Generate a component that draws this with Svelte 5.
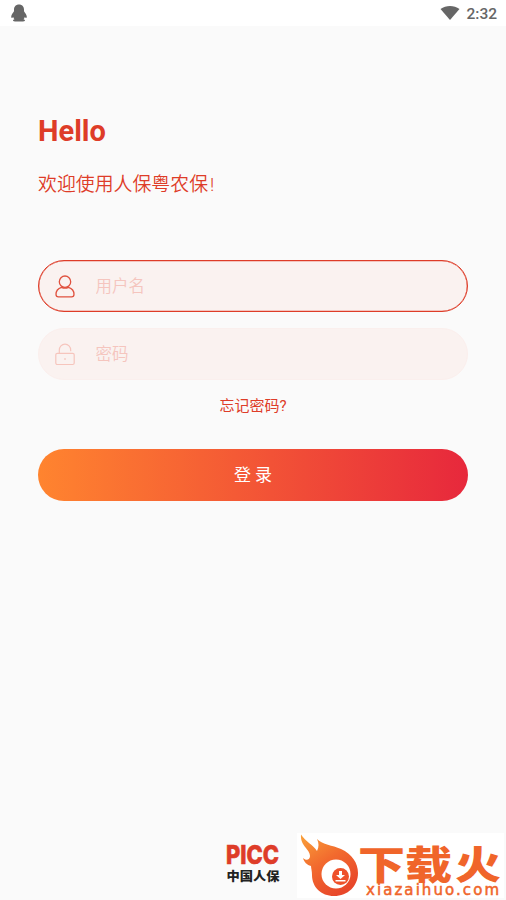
<script lang="ts">
  let username = $state("");
  let password = $state("");
</script>

<div class="screen">
  <header class="statusbar">
    <svg class="penguin" width="18" height="18" viewBox="0 0 18 18" aria-hidden="true">
      <path d="M9 .5C5.800.5 4 2.800 4 5.600v1.600C2.700 9 1.200 11 1.200 12.800c0 1.300.800 1.500 2 .2.200.900.700 1.700 1.300 2.300-.9.300-1.500.8-1.500 1.300 0 .7 1.500 1 3.300 1h5.400c1.800 0 3.300-.3 3.300-1 0-.5-.6-1-1.500-1.300.6-.6 1.100-1.400 1.300-2.300 1.200 1.300 2 1.100 2-.2 0-1.800-1.500-3.800-2.800-5.600V5.600C14 2.800 12.200.5 9 .5z" />
    </svg>
    <div class="status">
      <svg width="20" height="15" viewBox="0 0 20 15" aria-hidden="true">
        <path d="M.5 3C6-1 14-1 19.500 3L10 14z" />
      </svg>
      <span class="clock">2:32</span>
    </div>
  </header>

  <main>
    <h1>Hello</h1>
    <p class="welcome">欢迎使用人保粤农保<span>!</span></p>

    <form onsubmit={(e) => e.preventDefault()}>
      <label class="field active">
        <svg width="20" height="23" viewBox="0 0 20 23" aria-hidden="true">
          <circle cx="10" cy="6.700" r="5.700" />
          <path d="M6.500 12.400C3.300 13.500 1 16 1 19.200c0 1.600.8 2.600 2.400 2.600h13.200c1.600 0 2.400-1 2.400-2.600 0-3.200-2.300-5.700-5.500-6.800-2 .9-5 .9-7 0z" />
        </svg>
        <input type="text" placeholder="用户名" bind:value={username} />
      </label>
      <label class="field">
        <svg width="20" height="23" viewBox="0 0 20 23" aria-hidden="true">
          <rect x=".8" y="10.300" width="18.400" height="11.200" rx="1.500" />
          <path d="M4.300 10.300V7.200C4.300 3.700 6.800 1.200 10 1.200s5.700 2.500 5.700 6v1M10 15v2" />
        </svg>
        <input type="password" placeholder="密码" bind:value={password} />
      </label>
      <a class="forgot" href="#forgot">忘记密码?</a>
      <button type="submit">登 录</button>
    </form>
  </main>

  <footer>
    <svg class="picc" width="56" height="42" viewBox="0 0 56 42">
      <text class="picc-name" x="1" y="21.500" textLength="53" lengthAdjust="spacingAndGlyphs">PICC</text>
      <text class="picc-cn" x="1.500" y="39" textLength="53" lengthAdjust="spacingAndGlyphs">中国人保</text>
    </svg>
  </footer>

  <div class="watermark">
    <svg width="207" height="65" viewBox="0 0 207 65">
      <defs>
        <linearGradient id="flame" x1="0" y1="0" x2=".6" y2="1">
          <stop offset="0" stop-color="#f9a13a" />
          <stop offset=".5" stop-color="#f26a2e" />
          <stop offset="1" stop-color="#e8472a" />
        </linearGradient>
      </defs>
      <path
        fill="url(#flame)"
        d="M4 1.500C8 8 16 12 20 18c2-4 2-8 0-12 6 6 15 6 24 10 11 5 17 14 17 24 0 13-10 23-24 23-13 0-22-9-22-21 0-4-1-7-1-9-4-1-7-4-8-8 3 3 7 2 7-2C13 16 3 13 4 1.500z" />
      <circle cx="39" cy="41" r="14.500" fill="#fff" />
      <circle cx="43.500" cy="43.500" r="8.500" fill="#ee512b" />
      <path fill="#fff" d="M42 38h3v4h3l-4.500 4-4.500-4h3zM38.500 47h10v1.500h-10z" />
      <text class="wm-cn" x="61" y="45.500" textLength="94" lengthAdjust="spacingAndGlyphs">下载</text>
      <text class="wm-cn" x="158" y="45.500" textLength="46" lengthAdjust="spacingAndGlyphs">火</text>
      <text class="wm-url" x="69" y="62.300" textLength="133">xiazaihuo.com</text>
    </svg>
  </div>
</div>

<style>
  :global(body) {
    margin: 0;
    background: #fafafa;
  }

  .screen {
    position: relative;
    display: flex;
    flex-direction: column;
    height: 900px;
    background: #fafafa;
    color: #de3c28;
    font-family: Roboto, "Noto Sans CJK SC", sans-serif;
    overflow: hidden;
  }

  .statusbar {
    display: flex;
    align-items: center;
    justify-content: space-between;
    box-sizing: border-box;
    height: 26px;
    padding: 0 9px 0 10px;
    background: #fff;
    color: #666;
  }
  .statusbar svg {
    display: block;
    fill: #666;
  }
  .status {
    display: flex;
    align-items: center;
    gap: 6px;
  }
  .clock {
    font-size: 15.500px;
    font-weight: 500;
    line-height: 26px;
    padding-top: 1px;
  }

  main {
    flex: 1;
    padding: 87px 38px 0;
  }
  h1 {
    margin: 0;
    font-size: 29px;
    font-weight: 700;
    line-height: 36px;
  }
  .welcome {
    margin: 21px 0 0;
    font-size: 18.900px;
    font-weight: 350;
    line-height: 30px;
  }
  .welcome span {
    margin-left: 2px;
  }

  form {
    display: flex;
    flex-direction: column;
    margin-top: 60px;
  }
  .field {
    display: flex;
    align-items: center;
    gap: 21px;
    box-sizing: border-box;
    height: 52px;
    padding: 0 15.500px;
    border: 1px solid #faefed;
    border-radius: 26px;
    background: #faf2f0;
  }
  .field + .field {
    margin-top: 16px;
  }
  .field.active {
    border: 1px solid #de3c28;
    box-shadow: inset 0 0 0 0.300px #de3c28;
  }
  .field svg {
    flex: none;
    fill: none;
    stroke: #f6c5bd;
    stroke-width: 1.200;
  }
  .field.active svg {
    stroke: #e0523f;
    stroke-width: 1.300;
  }
  input {
    flex: 1;
    min-width: 0;
    padding: 0;
    border: 0;
    outline: 0;
    background: none;
    color: #de3c28;
    font: inherit;
    font-size: 16.500px;
    font-weight: 350;
  }
  input::placeholder {
    color: #f5c5be;
    opacity: 1;
  }
  .forgot {
    align-self: center;
    margin-top: 14px;
    color: #de3c28;
    font-size: 15px;
    line-height: 24px;
    text-decoration: none;
  }
  button {
    height: 52px;
    margin-top: 31px;
    padding: 0 0 3px;
    border: 0;
    border-radius: 26px;
    background: linear-gradient(90deg, #ff842f, #e7283c);
    color: #fff;
    font: inherit;
    font-size: 17px;
  }

  footer {
    display: flex;
    justify-content: center;
    padding-bottom: 16px;
  }
  .picc {
    display: block;
    overflow: visible;
  }
  .picc-name {
    fill: #de3c28;
    stroke: #de3c28;
    stroke-width: 0.600;
    font-family: Inter, sans-serif;
    font-size: 26px;
    font-weight: 800;
  }
  .picc-cn {
    fill: #222;
    font-family: "Noto Sans CJK SC", sans-serif;
    font-size: 12px;
    font-weight: 900;
  }

  .watermark {
    position: absolute;
    right: 2px;
    bottom: 2px;
    background: #fff;
  }
  .watermark svg {
    display: block;
    overflow: visible;
  }
  .wm-cn {
    fill: #f0652a;
    font-family: "Noto Sans CJK SC", sans-serif;
    font-size: 39px;
    font-weight: 900;
  }
  .wm-url {
    fill: #f0652a;
    stroke: #f0652a;
    stroke-width: 0.500;
    font-family: "DejaVu Sans", sans-serif;
    font-size: 15px;
  }
</style>
